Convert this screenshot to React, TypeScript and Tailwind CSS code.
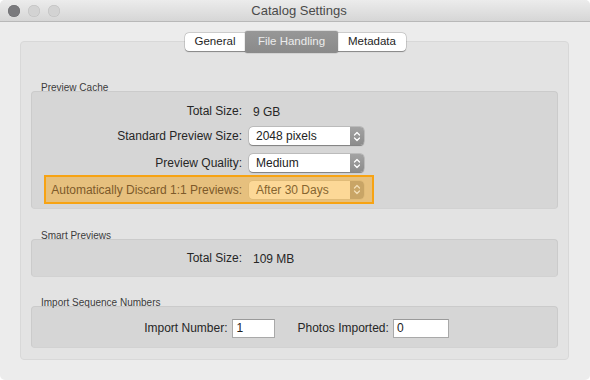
import { ReactNode } from 'react';

const FONT = { fontFamily: '"Liberation Sans", Arial, sans-serif' };

function Chevrons({ color }: { color: string }) {
  return (
    <svg width="8" height="11" viewBox="0 0 8 11" fill="none">
      <path d="M1.5 4 L4 1.5 L6.5 4" stroke={color} strokeWidth="1.3" strokeLinecap="round" strokeLinejoin="round" />
      <path d="M1.5 7 L4 9.5 L6.5 7" stroke={color} strokeWidth="1.3" strokeLinecap="round" strokeLinejoin="round" />
    </svg>
  );
}

function PopUp({ value, warm = false }: { value: string; warm?: boolean }) {
  return (
    <div
      className={`flex h-[18px] w-[115px] items-stretch overflow-hidden rounded-[4px] ${
        warm
          ? 'bg-[#fcd897] shadow-[0_0_0_0.5px_#d9b572]'
          : 'bg-white shadow-[0_0.5px_1px_rgba(0,0,0,0.35),0_0_0_0.5px_rgba(0,0,0,0.18)]'
      }`}
    >
      <span
        className={`flex flex-1 items-center pl-[7px] text-[12px] ${warm ? 'text-[#86652f]' : 'text-[#222]'}`}
      >
        {value}
      </span>
      <span
        className={`flex w-[14px] items-center justify-center ${
          warm ? 'bg-[#c9a566]' : 'bg-gradient-to-b from-[#a3a3a3] to-[#8c8c8c]'
        }`}
      >
        <Chevrons color={warm ? '#f3dfb8' : '#ffffff'} />
      </span>
    </div>
  );
}

function Row({ label, children, className = '' }: { label: string; children: ReactNode; className?: string }) {
  return (
    <div className={`flex items-center ${className}`}>
      <span className="w-[210px] text-right text-[12px] text-[#262626]">{label}</span>
      <div className="ml-[7px]">{children}</div>
    </div>
  );
}

function Section({ title, children, className = '' }: { title: string; children: ReactNode; className?: string }) {
  return (
    <div className={`flex flex-col ${className}`}>
      <span className="relative z-10 h-[10px] pl-[10px] text-[10px] leading-[14px] text-[#3c3c3c]">{title}</span>
      <div className="rounded-[4px] border border-[#cbcbcb] border-b-[#d2d2d2] bg-[#d6d6d6]">{children}</div>
    </div>
  );
}

function TextField({ value, width }: { value: string; width: string }) {
  return (
    <div
      className={`flex h-[19px] items-center border border-[#a9a9a9] border-t-[#9a9a9a] bg-white pl-[3px] text-[12px] text-[#222] ${width}`}
    >
      {value}
    </div>
  );
}

export default function App() {
  return (
    <div className="h-[380px] w-[590px] bg-white" style={FONT}>
      <div className="flex h-full w-full flex-col overflow-hidden rounded-[5px] bg-[#ececec]">
        <div className="relative flex h-[22px] shrink-0 items-center border-b border-[#b8b8b8] bg-gradient-to-b from-[#ececec] to-[#d6d6d6]">
          <div className="flex gap-[8px] pl-[8px]">
            <span className="h-[12px] w-[12px] rounded-full bg-[#7a7a7d] shadow-[inset_0_0_0_0.5px_#6a6a6d]" />
            <span className="h-[12px] w-[12px] rounded-full bg-[#d3d3d3] shadow-[inset_0_0_0_0.5px_#bdbdbd]" />
            <span className="h-[12px] w-[12px] rounded-full bg-[#d3d3d3] shadow-[inset_0_0_0_0.5px_#bdbdbd]" />
          </div>
          <span className="flex-1 pr-[52px] text-center text-[13px] text-[#4a4a4a]">Catalog Settings</span>
        </div>

        <div className="flex flex-1 flex-col px-[20px] pt-[11px]">
          <div className="relative z-10 flex justify-center pl-[1px]">
            <div className="flex h-[18px] items-stretch rounded-[4px] bg-white text-[11.5px] shadow-[0_0.5px_1px_rgba(0,0,0,0.35),0_0_0_0.5px_rgba(0,0,0,0.2)]">
              <span className="flex w-[60px] items-center justify-center text-[#1e1e1e]">General</span>
              <span className="-my-[2px] flex w-[93px] items-center justify-center rounded-[2px] bg-gradient-to-b from-[#979797] to-[#8a8a8a] text-[#ececec] shadow-[0_0_0_0.5px_rgba(0,0,0,0.15)]">
                File Handling
              </span>
              <span className="flex w-[68px] items-center justify-center text-[#1e1e1e]">Metadata</span>
            </div>
          </div>

          <div className="-mt-[10px] flex h-[319px] w-[549px] flex-col rounded-[4px] border border-[#d8d8d8] bg-[#e3e3e3] px-[10px] pt-[39px]">
            <Section title="Preview Cache">
              <div className="flex flex-col pb-[4px] pt-[7px]">
                <Row label="Total Size:" className="h-[24px]">
                  <span className="pl-[4px] text-[12px] text-[#262626]">9 GB</span>
                </Row>
                <Row label="Standard Preview Size:" className="mt-[4px] h-[18px]">
                  <PopUp value="2048 pixels" />
                </Row>
                <Row label="Preview Quality:" className="mt-[9px] h-[18px]">
                  <PopUp value="Medium" />
                </Row>
                <div className="ml-[12px] mt-[3px] flex h-[29px] w-[330px] items-center border-2 border-[#f7a313] bg-[#e6c07e]">
                  <span className="w-[196px] text-right text-[12px] text-[#7d5a2a]">
                    Automatically Discard 1:1 Previews:
                  </span>
                  <div className="ml-[7px]">
                    <PopUp value="After 30 Days" warm />
                  </div>
                </div>
              </div>
            </Section>

            <Section title="Smart Previews" className="mt-[20px]">
              <Row label="Total Size:" className="h-[36px]">
                <span className="pl-[4px] text-[12px] text-[#262626]">109 MB</span>
              </Row>
            </Section>

            <Section title="Import Sequence Numbers" className="mt-[19px]">
              <div className="mt-[1px] flex h-[39px] items-center justify-center pl-[4px] pt-[1px]">
                <span className="text-[12px] text-[#262626]">Import Number:</span>
                <div className="ml-[5px]">
                  <TextField value="1" width="w-[43px]" />
                </div>
                <span className="ml-[22px] text-[12px] text-[#262626]">Photos Imported:</span>
                <div className="ml-[4px]">
                  <TextField value="0" width="w-[56px]" />
                </div>
              </div>
            </Section>
          </div>
        </div>
      </div>
    </div>
  );
}
